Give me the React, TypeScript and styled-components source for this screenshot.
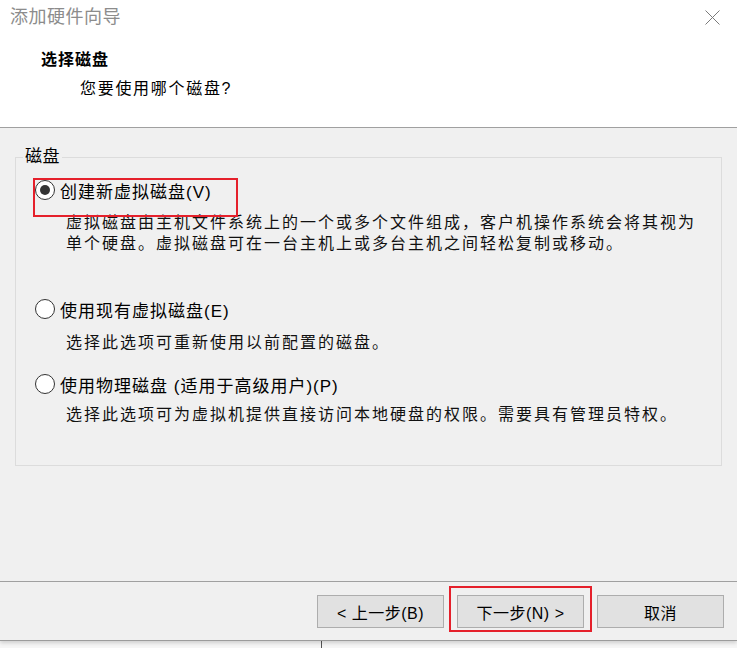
import React from "react";
import styled, { createGlobalStyle } from "styled-components";

const GlobalStyle = createGlobalStyle`
  html, body { margin: 0; padding: 0; background: #f6f6f6; }
  body { font-family: "Liberation Sans", "Noto Sans CJK SC", sans-serif; color: #000; }
  * { box-sizing: border-box; }
`;

const Window = styled.div`
  width: 737px;
  height: 641px;
  display: flex;
  flex-direction: column;
  background: #f0f0f0;
  border-bottom: 1px solid #9c9c9c;
  box-shadow: 0 2px 4px rgba(0, 0, 0, 0.16);
  position: relative;
  z-index: 1;
`;

const TitleBar = styled.div`
  height: 34px;
  flex: none;
  display: flex;
  align-items: center;
  justify-content: space-between;
  padding: 0 17px 0 10px;
  background: #fff;
`;

const Title = styled.div`
  font-size: 18px;
  line-height: 20px;
  letter-spacing: 0.5px;
  color: #8c8c8c;
`;

const Header = styled.div`
  height: 94px;
  flex: none;
  background: #fff;
  border-bottom: 1px solid #a0a0a0;
  display: flex;
  flex-direction: column;
`;

const HeaderTitle = styled.div`
  margin: 16px 0 0 41px;
  font-size: 16px;
  line-height: 20px;
  font-weight: bold;
  letter-spacing: 1px;
`;

const HeaderSub = styled.div`
  margin: 8px 0 0 80px;
  font-size: 16px;
  line-height: 21px;
  letter-spacing: 1.7px;
`;

const Content = styled.div`
  flex: 1;
  padding: 19px 15px 0 15px;
`;

const Group = styled.fieldset`
  margin: 0;
  height: 319px;
  border: 1px solid #dcdcdc;
  padding: 0 0 0 19px;
  display: flex;
  flex-direction: column;
  align-items: flex-start;
`;

const Legend = styled.legend`
  margin-left: -12px;
  padding: 0 2px;
  font-size: 17px;
  line-height: 20px;
  letter-spacing: 0.5px;
`;

const OptionRow = styled.label<{ $gap: number }>`
  position: relative;
  display: flex;
  align-items: center;
  gap: 5px;
  height: 22px;
  margin-top: ${(p) => p.$gap}px;
  font-size: 17px;
  letter-spacing: 1px;
`;

const Radio = styled.span<{ $checked?: boolean }>`
  width: 20px;
  height: 20px;
  flex: none;
  border-radius: 50%;
  border: 1px solid #333;
  background: #fff;
  display: flex;
  align-items: center;
  justify-content: center;
  &::after {
    content: "";
    width: 10px;
    height: 10px;
    border-radius: 50%;
    background: #333;
    display: ${(p) => (p.$checked ? "block" : "none")};
  }
`;

const Desc = styled.div<{ $gap: number }>`
  margin-top: ${(p) => p.$gap}px;
  padding-left: 31px;
  font-size: 16px;
  line-height: 21px;
  letter-spacing: 2px;
  color: #111;
  white-space: nowrap;
`;

const RedBox = styled.span<{ $l: number; $t: number; $w: number; $h: number }>`
  position: absolute;
  left: ${(p) => p.$l}px;
  top: ${(p) => p.$t}px;
  width: ${(p) => p.$w}px;
  height: ${(p) => p.$h}px;
  border: 2px solid #e5202b;
  pointer-events: none;
`;

const Footer = styled.div`
  height: 59px;
  flex: none;
  border-top: 1px solid #a0a0a0;
  display: flex;
  justify-content: flex-end;
  align-items: flex-start;
  gap: 13px;
  padding: 13px 13px 0 0;
`;

const Button = styled.button`
  position: relative;
  width: 127px;
  height: 33px;
  background: #e1e1e1;
  border: 1px solid #adadad;
  border-radius: 0;
  font-family: "Liberation Sans", "Noto Sans CJK SC", sans-serif;
  font-size: 16px;
  color: #000;
  padding: 0;
  letter-spacing: 0.5px;
`;

const Desktop = styled.div`
  height: 7px;
  display: flex;
`;

const DesktopEdge = styled.div`
  width: 322px;
  border-right: 1px solid #555;
`;

const CloseIcon = () => (
  <svg width="15" height="15" viewBox="0 0 15 15">
    <path d="M0.5 0.5 L14.5 14.5 M14.5 0.5 L0.5 14.5" stroke="#7a7a7a" strokeWidth="1" fill="none" />
  </svg>
);

export default function App() {
  return (
    <>
      <GlobalStyle />
      <Window>
        <TitleBar>
          <Title>添加硬件向导</Title>
          <CloseIcon />
        </TitleBar>
        <Header>
          <HeaderTitle>选择磁盘</HeaderTitle>
          <HeaderSub>您要使用哪个磁盘?</HeaderSub>
        </Header>
        <Content>
          <Group>
            <Legend>磁盘</Legend>
            <OptionRow $gap={12}>
              <Radio $checked />
              创建新虚拟磁盘(V)
              <RedBox $l={-2} $t={-1} $w={205} $h={39} />
            </OptionRow>
            <Desc $gap={11}>
              虚拟磁盘由主机文件系统上的一个或多个文件组成，客户机操作系统会将其视为
              <br />
              单个硬盘。虚拟磁盘可在一台主机上或多台主机之间轻松复制或移动。
            </Desc>
            <OptionRow $gap={44}>
              <Radio />
              使用现有虚拟磁盘(E)
            </OptionRow>
            <Desc $gap={12}>选择此选项可重新使用以前配置的磁盘。</Desc>
            <OptionRow $gap={20}>
              <Radio />
              使用物理磁盘 (适用于高级用户)(P)
            </OptionRow>
            <Desc $gap={9}>选择此选项可为虚拟机提供直接访问本地硬盘的权限。需要具有管理员特权。</Desc>
          </Group>
        </Content>
        <Footer>
          <Button>&lt; 上一步(B)</Button>
          <Button>
            下一步(N) &gt;
            <RedBox $l={-9} $t={-10} $w={143} $h={46} />
          </Button>
          <Button>取消</Button>
        </Footer>
      </Window>
      <Desktop>
        <DesktopEdge />
      </Desktop>
    </>
  );
}
